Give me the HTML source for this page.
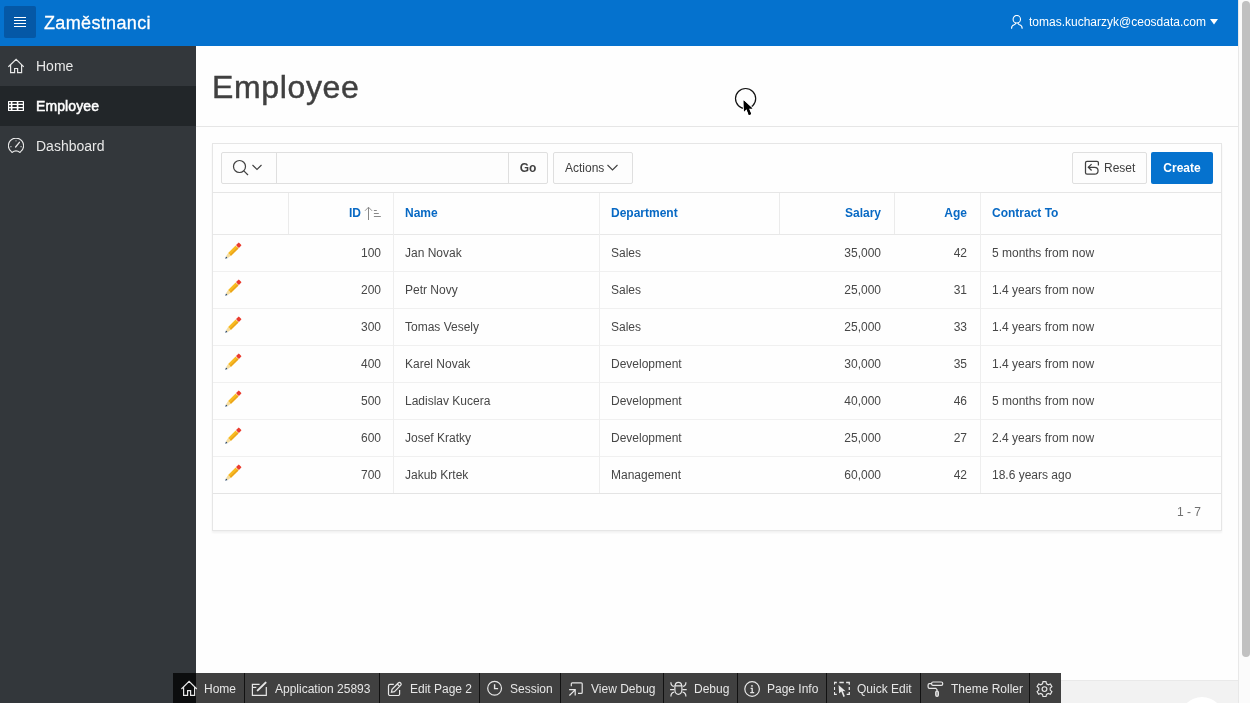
<!DOCTYPE html>
<html><head><meta charset="utf-8">
<style>
*{box-sizing:border-box;margin:0;padding:0}
html{background:#fefefe;width:1250px;height:703px;overflow:hidden}body{will-change:transform;width:1250px;height:703px;overflow:hidden;font-family:"Liberation Sans",sans-serif;color:#404040}
.a{position:absolute}
#hdr{left:0;top:0;width:1238px;height:46px;background:#0572ce}
#navbtn{left:4px;top:6px;width:32px;height:32px;background:#0558a6;border-radius:2px}
#navbtn i{position:absolute;left:10px;width:12px;height:1px;background:#fff}
#apptitle{left:44px;top:0;height:46px;line-height:46px;font-size:18px;color:#fff;letter-spacing:0.35px;-webkit-text-stroke:0.3px #fff}
#user{left:1029px;top:0;height:46px;line-height:44px;font-size:12px;color:#fff}
#side{left:0;top:46px;width:196px;height:657px;background:#33373b}
.nav{position:absolute;left:0;width:196px;height:40px;line-height:40px;font-size:14px;color:#e8e8e8}
.nav span{position:absolute;left:36px;top:0}
.nav svg{position:absolute;left:8px;top:12px}
#pgtitle{left:212px;top:71px;font-size:32px;line-height:32px;color:#404040;letter-spacing:0.65px;-webkit-text-stroke:0.45px #404040}
#sep{left:196px;top:126px;width:1042px;height:1px;background:#e6e6e6}
#region{left:212px;top:143px;width:1010px;height:388px;border:1px solid #e6e6e6;background:#fefefe;box-shadow:0 2px 2px rgba(0,0,0,.05)}
.btn{position:absolute;height:32px;border:1px solid #dfdfdf;border-radius:2px;background:#fdfdfd;font-size:12px;line-height:30px;color:#404040}
.hl{position:absolute;height:1px;background:#ebebeb}
.vl{position:absolute;width:1px;background:#ebebeb}
.th{position:absolute;top:193px;height:41px;line-height:41px;font-size:12px;font-weight:bold;color:#0869c4}
.td{position:absolute;height:36px;line-height:36px;font-size:12px;color:#474747}
.r{text-align:right}
#devbar{left:173px;top:673px;width:888px;height:30px;background:rgba(0,0,0,.75)}
.dv{position:absolute;top:673px;width:1px;height:30px;background:#111}
.dt{position:absolute;top:674px;height:30px;line-height:30px;font-size:12px;color:#e6e6e6}
.di{position:absolute}
</style></head><body>

<div id="hdr" class="a">
  <div id="navbtn" class="a"><i style="top:11px"></i><i style="top:14px"></i><i style="top:17px"></i><i style="top:20px"></i></div>
  <div id="apptitle" class="a">Zaměstnanci</div>
  <svg class="a" style="left:1010px;top:15px" width="14" height="14" viewBox="0 0 14 14" fill="none" stroke="#fff" stroke-width="1.1"><ellipse cx="6.8" cy="4.2" rx="3.7" ry="3.8"/><path d="M1.6 13.7 Q1.3 10.6 4.2 9.8 Q5.3 9.4 5.9 8.1 M7.8 8.1 Q8.4 9.4 9.5 9.8 Q12.4 10.6 12.1 13.7"/></svg>
  <div id="user" class="a">tomas.kucharzyk@ceosdata.com</div>
  <svg class="a" style="left:1210px;top:19px" width="8" height="6" viewBox="0 0 8 6"><path d="M0 0H8L4 5.5Z" fill="#fff"/></svg>
</div>

<div id="side" class="a"></div>
<div class="nav" style="top:46px"><svg width="16" height="16" viewBox="0 0 16 16" fill="none" stroke="#e8e8e8" stroke-width="1.2"><path d="M0.4 8.8 L8.1 1.3 L15.8 8.8 M2.6 6.8 V14.6 H6.6 V10.5 H9.6 V14.6 H13.6 V6.8"/></svg><span>Home</span></div>
<div class="nav" style="top:86px;background:#222629;color:#fff;-webkit-text-stroke:0.5px #fff;letter-spacing:0.1px"><svg width="16" height="16" viewBox="0 0 16 16"><rect x="0" y="3" width="16" height="10" rx="0.6" fill="#fff"/><rect x="1.0" y="4.0" width="2.0" height="1.87" rx="0.9" fill="#222629"/><rect x="4.2" y="4.0" width="4.8" height="1.87" rx="0.9" fill="#222629"/><rect x="10.2" y="4.0" width="4.8" height="1.87" rx="0.9" fill="#222629"/><rect x="1.0" y="7.07" width="2.0" height="1.87" rx="0.9" fill="#222629"/><rect x="4.2" y="7.07" width="4.8" height="1.87" rx="0.9" fill="#222629"/><rect x="10.2" y="7.07" width="4.8" height="1.87" rx="0.9" fill="#222629"/><rect x="1.0" y="10.13" width="2.0" height="1.87" rx="0.9" fill="#222629"/><rect x="4.2" y="10.13" width="4.8" height="1.87" rx="0.9" fill="#222629"/><rect x="10.2" y="10.13" width="4.8" height="1.87" rx="0.9" fill="#222629"/></svg><span>Employee</span></div>
<div class="nav" style="top:126px"><svg width="16" height="16" viewBox="0 0 16 16" fill="none" stroke="#e8e8e8" stroke-width="1.15"><path d="M3.6 13.9 A7.6 7.6 0 1 1 12.4 13.9 L12 14.5 A6.3 6.3 0 0 0 4 14.5 Z" stroke-linejoin="round"/><path d="M7.6 9 L11.4 4.3" stroke-width="1.3" stroke-linecap="round"/><path d="M8 2.4 V3.3 M2.5 8.6 H3.4 M12.6 8.6 H13.5"/></svg><span>Dashboard</span></div>

<div id="pgtitle" class="a">Employee</div>
<div id="sep" class="a"></div>

<div id="region" class="a"></div>
<!-- toolbar -->
<div class="btn" style="left:221px;top:152px;width:327px"></div>
<div class="vl" style="left:276px;top:153px;height:30px;background:#dfdfdf"></div>
<div class="vl" style="left:508px;top:153px;height:30px;background:#dfdfdf"></div>
<svg class="a" style="left:232px;top:159px" width="18" height="18" viewBox="0 0 18 18" fill="none" stroke="#404040" stroke-width="1.2"><circle cx="7.5" cy="7.5" r="6"/><path d="M11.8 11.8 L16 16"/></svg>
<svg class="a" style="left:252px;top:164px" width="10" height="7" viewBox="0 0 10 7" fill="none" stroke="#404040" stroke-width="1.1"><path d="M0.5 1 L5 5.5 L9.5 1"/></svg>
<div class="a" style="left:509px;top:152px;width:38px;height:32px;line-height:32px;text-align:center;font-size:12px;font-weight:bold;color:#404040">Go</div>
<div class="btn" style="left:553px;top:152px;width:80px"><span style="position:absolute;left:11px;top:0">Actions</span></div>
<svg class="a" style="left:607px;top:164px" width="11" height="7" viewBox="0 0 11 7" fill="none" stroke="#404040" stroke-width="1.1"><path d="M0.5 1 L5.5 6 L10.5 1"/></svg>
<div class="btn" style="left:1072px;top:152px;width:75px"><span style="position:absolute;left:31px;top:0">Reset</span></div>
<svg class="a" style="left:1080px;top:157px" width="24" height="22" viewBox="0 0 24 22" fill="none" stroke="#404040" stroke-width="1.25"><path d="M18.4 8.6 V5.8 Q18.4 4.4 17 4.4 H7 Q5.5 4.4 5.5 5.8 V15.8 Q5.5 17.2 7 17.2 H14.6 A3.45 3.45 0 0 0 14.6 10.3 H8.3"/><path d="M11.6 7.1 L8.3 10.3 L11.6 13.5"/></svg>
<div class="a" style="left:1151px;top:152px;width:62px;height:32px;line-height:32px;background:#0572ce;border-radius:2px;color:#fff;font-weight:bold;font-size:12px;text-align:center">Create</div>
<!-- table -->
<div class="hl" style="left:213px;top:192px;width:1008px;background:#e6e6e6"></div>
<div class="hl" style="left:213px;top:234px;width:1008px;background:#e8e8e8"></div>
<div class="hl" style="left:213px;top:271px;width:1008px;background:#f0f0f0"></div>
<div class="hl" style="left:213px;top:308px;width:1008px;background:#f0f0f0"></div>
<div class="hl" style="left:213px;top:345px;width:1008px;background:#f0f0f0"></div>
<div class="hl" style="left:213px;top:382px;width:1008px;background:#f0f0f0"></div>
<div class="hl" style="left:213px;top:419px;width:1008px;background:#f0f0f0"></div>
<div class="hl" style="left:213px;top:456px;width:1008px;background:#f0f0f0"></div>
<div class="hl" style="left:213px;top:493px;width:1008px;background:#e4e4e4"></div>
<div class="vl" style="left:288px;top:193px;height:41px"></div>
<div class="vl" style="left:779px;top:193px;height:41px"></div>
<div class="vl" style="left:894px;top:193px;height:41px"></div>
<div class="vl" style="left:393px;top:193px;height:300px;background:#eeeeee"></div>
<div class="vl" style="left:599px;top:193px;height:300px;background:#eeeeee"></div>
<div class="vl" style="left:980px;top:193px;height:300px;background:#eeeeee"></div>
<div class="th r" style="left:300px;width:61px">ID</div>
<svg class="a" style="left:364px;top:206px" width="18" height="15" viewBox="0 0 18 15" fill="none" stroke="#888" stroke-width="1"><path d="M4.5 1.3 V14"/><path d="M1 4.8 L4.5 1.2 L8 4.8" stroke-width="0.9"/><path d="M9.9 4.5 H12.8 M9.9 7.5 H14.8 M9.9 10.5 H16.8"/></svg>
<div class="th" style="left:405px">Name</div>
<div class="th" style="left:611px">Department</div>
<div class="th r" style="left:780px;width:101px">Salary</div>
<div class="th r" style="left:895px;width:72px">Age</div>
<div class="th" style="left:992px">Contract To</div>
<svg class="a" style="left:224px;top:242px" width="18" height="18" viewBox="0 0 18 18"><g transform="translate(1.3 16.7) rotate(-45)"><path d="M-0.2 0 L2.3 -1.2 L2.3 1.2 Z" fill="#2d4a6b"/><path d="M2.3 -1.2 L6 -2 L6 2 L2.3 1.2 Z" fill="#f4dca0"/><rect x="6" y="-2" width="10.6" height="4" fill="#f8bb22"/><rect x="6" y="0.5" width="10.6" height="1.5" fill="#eba41c"/><rect x="17.1" y="-2.05" width="4" height="4.1" rx="0.8" fill="#ea3d2f"/></g></svg>
<div class="td r" style="top:235px;left:300px;width:81px">100</div>
<div class="td" style="top:235px;left:405px">Jan Novak</div>
<div class="td" style="top:235px;left:611px">Sales</div>
<div class="td r" style="top:235px;left:780px;width:101px">35,000</div>
<div class="td r" style="top:235px;left:895px;width:72px">42</div>
<div class="td" style="top:235px;left:992px">5 months from now</div>
<svg class="a" style="left:224px;top:279px" width="18" height="18" viewBox="0 0 18 18"><g transform="translate(1.3 16.7) rotate(-45)"><path d="M-0.2 0 L2.3 -1.2 L2.3 1.2 Z" fill="#2d4a6b"/><path d="M2.3 -1.2 L6 -2 L6 2 L2.3 1.2 Z" fill="#f4dca0"/><rect x="6" y="-2" width="10.6" height="4" fill="#f8bb22"/><rect x="6" y="0.5" width="10.6" height="1.5" fill="#eba41c"/><rect x="17.1" y="-2.05" width="4" height="4.1" rx="0.8" fill="#ea3d2f"/></g></svg>
<div class="td r" style="top:272px;left:300px;width:81px">200</div>
<div class="td" style="top:272px;left:405px">Petr Novy</div>
<div class="td" style="top:272px;left:611px">Sales</div>
<div class="td r" style="top:272px;left:780px;width:101px">25,000</div>
<div class="td r" style="top:272px;left:895px;width:72px">31</div>
<div class="td" style="top:272px;left:992px">1.4 years from now</div>
<svg class="a" style="left:224px;top:316px" width="18" height="18" viewBox="0 0 18 18"><g transform="translate(1.3 16.7) rotate(-45)"><path d="M-0.2 0 L2.3 -1.2 L2.3 1.2 Z" fill="#2d4a6b"/><path d="M2.3 -1.2 L6 -2 L6 2 L2.3 1.2 Z" fill="#f4dca0"/><rect x="6" y="-2" width="10.6" height="4" fill="#f8bb22"/><rect x="6" y="0.5" width="10.6" height="1.5" fill="#eba41c"/><rect x="17.1" y="-2.05" width="4" height="4.1" rx="0.8" fill="#ea3d2f"/></g></svg>
<div class="td r" style="top:309px;left:300px;width:81px">300</div>
<div class="td" style="top:309px;left:405px">Tomas Vesely</div>
<div class="td" style="top:309px;left:611px">Sales</div>
<div class="td r" style="top:309px;left:780px;width:101px">25,000</div>
<div class="td r" style="top:309px;left:895px;width:72px">33</div>
<div class="td" style="top:309px;left:992px">1.4 years from now</div>
<svg class="a" style="left:224px;top:353px" width="18" height="18" viewBox="0 0 18 18"><g transform="translate(1.3 16.7) rotate(-45)"><path d="M-0.2 0 L2.3 -1.2 L2.3 1.2 Z" fill="#2d4a6b"/><path d="M2.3 -1.2 L6 -2 L6 2 L2.3 1.2 Z" fill="#f4dca0"/><rect x="6" y="-2" width="10.6" height="4" fill="#f8bb22"/><rect x="6" y="0.5" width="10.6" height="1.5" fill="#eba41c"/><rect x="17.1" y="-2.05" width="4" height="4.1" rx="0.8" fill="#ea3d2f"/></g></svg>
<div class="td r" style="top:346px;left:300px;width:81px">400</div>
<div class="td" style="top:346px;left:405px">Karel Novak</div>
<div class="td" style="top:346px;left:611px">Development</div>
<div class="td r" style="top:346px;left:780px;width:101px">30,000</div>
<div class="td r" style="top:346px;left:895px;width:72px">35</div>
<div class="td" style="top:346px;left:992px">1.4 years from now</div>
<svg class="a" style="left:224px;top:390px" width="18" height="18" viewBox="0 0 18 18"><g transform="translate(1.3 16.7) rotate(-45)"><path d="M-0.2 0 L2.3 -1.2 L2.3 1.2 Z" fill="#2d4a6b"/><path d="M2.3 -1.2 L6 -2 L6 2 L2.3 1.2 Z" fill="#f4dca0"/><rect x="6" y="-2" width="10.6" height="4" fill="#f8bb22"/><rect x="6" y="0.5" width="10.6" height="1.5" fill="#eba41c"/><rect x="17.1" y="-2.05" width="4" height="4.1" rx="0.8" fill="#ea3d2f"/></g></svg>
<div class="td r" style="top:383px;left:300px;width:81px">500</div>
<div class="td" style="top:383px;left:405px">Ladislav Kucera</div>
<div class="td" style="top:383px;left:611px">Development</div>
<div class="td r" style="top:383px;left:780px;width:101px">40,000</div>
<div class="td r" style="top:383px;left:895px;width:72px">46</div>
<div class="td" style="top:383px;left:992px">5 months from now</div>
<svg class="a" style="left:224px;top:427px" width="18" height="18" viewBox="0 0 18 18"><g transform="translate(1.3 16.7) rotate(-45)"><path d="M-0.2 0 L2.3 -1.2 L2.3 1.2 Z" fill="#2d4a6b"/><path d="M2.3 -1.2 L6 -2 L6 2 L2.3 1.2 Z" fill="#f4dca0"/><rect x="6" y="-2" width="10.6" height="4" fill="#f8bb22"/><rect x="6" y="0.5" width="10.6" height="1.5" fill="#eba41c"/><rect x="17.1" y="-2.05" width="4" height="4.1" rx="0.8" fill="#ea3d2f"/></g></svg>
<div class="td r" style="top:420px;left:300px;width:81px">600</div>
<div class="td" style="top:420px;left:405px">Josef Kratky</div>
<div class="td" style="top:420px;left:611px">Development</div>
<div class="td r" style="top:420px;left:780px;width:101px">25,000</div>
<div class="td r" style="top:420px;left:895px;width:72px">27</div>
<div class="td" style="top:420px;left:992px">2.4 years from now</div>
<svg class="a" style="left:224px;top:464px" width="18" height="18" viewBox="0 0 18 18"><g transform="translate(1.3 16.7) rotate(-45)"><path d="M-0.2 0 L2.3 -1.2 L2.3 1.2 Z" fill="#2d4a6b"/><path d="M2.3 -1.2 L6 -2 L6 2 L2.3 1.2 Z" fill="#f4dca0"/><rect x="6" y="-2" width="10.6" height="4" fill="#f8bb22"/><rect x="6" y="0.5" width="10.6" height="1.5" fill="#eba41c"/><rect x="17.1" y="-2.05" width="4" height="4.1" rx="0.8" fill="#ea3d2f"/></g></svg>
<div class="td r" style="top:457px;left:300px;width:81px">700</div>
<div class="td" style="top:457px;left:405px">Jakub Krtek</div>
<div class="td" style="top:457px;left:611px">Management</div>
<div class="td r" style="top:457px;left:780px;width:101px">60,000</div>
<div class="td r" style="top:457px;left:895px;width:72px">42</div>
<div class="td" style="top:457px;left:992px">18.6 years ago</div>
<div class="td r" style="top:494px;left:1100px;width:101px;color:#707070">1 - 7</div>


<!-- bottom band -->
<div class="a" style="left:1061px;top:680px;width:177px;height:23px;background:#f2f2f2;border-top:1px solid #e9e9e9"></div>
<div class="a" style="left:1180px;top:697px;width:44px;height:44px;border-radius:50%;background:#fff"></div>
<!-- scrollbar -->
<div class="a" style="left:1238px;top:0;width:12px;height:703px;background:#fbfbfb;border-left:1px solid #e8e8e8"></div>
<div class="a" style="left:1242px;top:1px;width:8px;height:656px;background:#c1c1c1;border-radius:4px"></div>
<!-- dev toolbar -->
<div id="devbar" class="a"></div>
<div class="dv" style="left:244px"></div>
<svg class="di" style="left:181px;top:680px" width="17" height="17" viewBox="0 0 17 17" fill="none" stroke="#e6e6e6" stroke-width="1.2"><path d="M0.4 9 L8.1 1.3 L15.8 9 M2.6 6.9 V15.3 H6.6 V10.6 H9.6 V15.3 H13.6 V6.9"/></svg>
<div class="dt" style="left:204px">Home</div>
<div class="dv" style="left:379px"></div>
<svg class="di" style="left:251px;top:680px" width="17" height="17" viewBox="0 0 17 17" fill="none" stroke="#e6e6e6" stroke-width="1.2"><path d="M8.6 4.4 H1.4 V15.3 H15.3 V7"/><path d="M1.4 7.4 H5.3"/><path d="M6.7 10.4 L14.6 2.6" stroke-width="2" stroke-linecap="round"/></svg>
<div class="dt" style="left:275px">Application 25893</div>
<div class="dv" style="left:479px"></div>
<svg class="di" style="left:387px;top:680px" width="17" height="17" viewBox="0 0 17 17" fill="none" stroke="#e6e6e6" stroke-width="1.2"><path d="M6.8 4.4 H3 A1.5 1.5 0 0 0 1.5 5.9 V14 A1.5 1.5 0 0 0 3 15.5 H11.1 A1.5 1.5 0 0 0 12.6 14 V9.9"/><g transform="translate(4.4 12.3) rotate(-45)"><path d="M0 0 L2.6 -1.7 H11.4 A1.7 1.7 0 0 1 11.4 1.7 H2.6 Z"/><path d="M10 -1.7 V1.7"/></g></svg>
<div class="dt" style="left:410px">Edit Page 2</div>
<div class="dv" style="left:560px"></div>
<svg class="di" style="left:487px;top:680px" width="17" height="17" viewBox="0 0 17 17" fill="none" stroke="#e6e6e6" stroke-width="1.2"><circle cx="7.6" cy="8.3" r="6.9"/><path d="M7.6 4.2 V8.6 H11.1" stroke-width="1.4"/></svg>
<div class="dt" style="left:510px">Session</div>
<div class="dv" style="left:663px"></div>
<svg class="di" style="left:568px;top:680px" width="17" height="17" viewBox="0 0 17 17" fill="none" stroke="#e6e6e6" stroke-width="1.2"><path d="M3.3 6.2 V3.8 A1 1 0 0 1 4.3 2.8 H13.2 A1 1 0 0 1 14.2 3.8 V12.4 A1 1 0 0 1 13.2 13.4 H10"/><path d="M1.4 15.5 L7.1 9.8 M1.1 9.6 H7.2 V15.6"/></svg>
<div class="dt" style="left:591px">View Debug</div>
<div class="dv" style="left:737px"></div>
<svg class="di" style="left:670px;top:680px" width="17" height="17" viewBox="0 0 17 17" fill="none" stroke="#e6e6e6" stroke-width="1.2"><path d="M4.9 5.9 H11.9 V10 A3.5 4.3 0 0 1 4.9 10 Z"/><path d="M5.2 5.9 A3.2 3.5 0 0 1 11.6 5.9"/><path d="M3.9 6.3 Q0.9 5.9 0.9 2.2 M12.9 6.3 Q15.9 5.9 15.9 2.2 M4.3 12.1 Q0.9 12.5 0.9 16.6 M12.5 12.1 Q15.9 12.5 15.9 16.6 M0.1 9.6 H4.4 M12.4 9.6 H16.7"/></svg>
<div class="dt" style="left:694px">Debug</div>
<div class="dv" style="left:826px"></div>
<svg class="di" style="left:744px;top:680px" width="17" height="17" viewBox="0 0 17 17" fill="none" stroke="#e6e6e6" stroke-width="1.2"><circle cx="8.1" cy="9" r="7.3"/><path d="M6.6 8.3 H8.2 V12.7 M6.2 12.7 H10.2" stroke-width="1.3"/><circle cx="8" cy="5.9" r="0.9" fill="#e6e6e6" stroke="none"/></svg>
<div class="dt" style="left:767px">Page Info</div>
<div class="dv" style="left:920px"></div>
<svg class="di" style="left:834px;top:680px" width="17" height="17" viewBox="0 0 17 17" fill="none" stroke="#e6e6e6" stroke-width="1.3"><path d="M0.4 4.6 V2.5 H2.8 M5.4 2.5 H9.8 M12.1 2.5 H15.3 V4.7 M0.4 6.9 V10 M15.3 6.9 V10 M0.4 12.1 V14.3 H2.8 M12.7 14.3 H15.3 V12.1"/><path d="M4.6 5 L5.1 13.5 L7.3 11.4 L9.4 16.9 L10.9 16.3 L8.8 10.9 L11.6 11.2 Z" fill="#e6e6e6" stroke="none"/></svg>
<div class="dt" style="left:857px">Quick Edit</div>
<div class="dv" style="left:1029px"></div>
<svg class="di" style="left:927px;top:680px" width="17" height="17" viewBox="0 0 17 17" fill="none" stroke="#e6e6e6" stroke-width="1.2"><rect x="4.6" y="2" width="11.1" height="3.3" rx="1.4"/><path d="M4.6 3.6 H2.5 Q1.1 3.6 1.1 5 V7 Q1.1 8.4 2.5 8.4 H8.8 L10 9.7 V11"/><rect x="8.7" y="11.1" width="2.7" height="5.3" rx="1.35" fill="#9a9a9a"/></svg>
<div class="dt" style="left:951px">Theme Roller</div>
<svg class="di" style="left:1036px;top:680px" width="17" height="17" viewBox="0 -0.6 17 17" fill="none" stroke="#e6e6e6" stroke-width="1.15"><path d="M7 1 H10 L10.5 3.2 L12.3 4.2 L14.4 3.4 L15.9 6 L14.2 7.5 V9.5 L15.9 11 L14.4 13.6 L12.3 12.8 L10.5 13.8 L10 16 H7 L6.5 13.8 L4.7 12.8 L2.6 13.6 L1.1 11 L2.8 9.5 V7.5 L1.1 6 L2.6 3.4 L4.7 4.2 L6.5 3.2 Z"/><circle cx="8.5" cy="8.5" r="2.4"/></svg>
<!-- cursor -->
<svg class="a" style="left:730px;top:84px" width="30" height="36" viewBox="0 0 30 36"><circle cx="15.6" cy="14.6" r="10.1" fill="none" stroke="#111" stroke-width="1.2"/><path d="M13.7 16.5 L14 27.6 L16.6 25.1 L18.9 30.9 L21.1 30 L18.8 24.6 L22.4 24.5 Z" fill="#000" stroke="#fff" stroke-width="2.2" stroke-linejoin="round" paint-order="stroke"/><path d="M13.7 16.5 L14 27.6 L16.6 25.1 L18.9 30.9 L21.1 30 L18.8 24.6 L22.4 24.5 Z" fill="#000"/></svg>
</body></html>
